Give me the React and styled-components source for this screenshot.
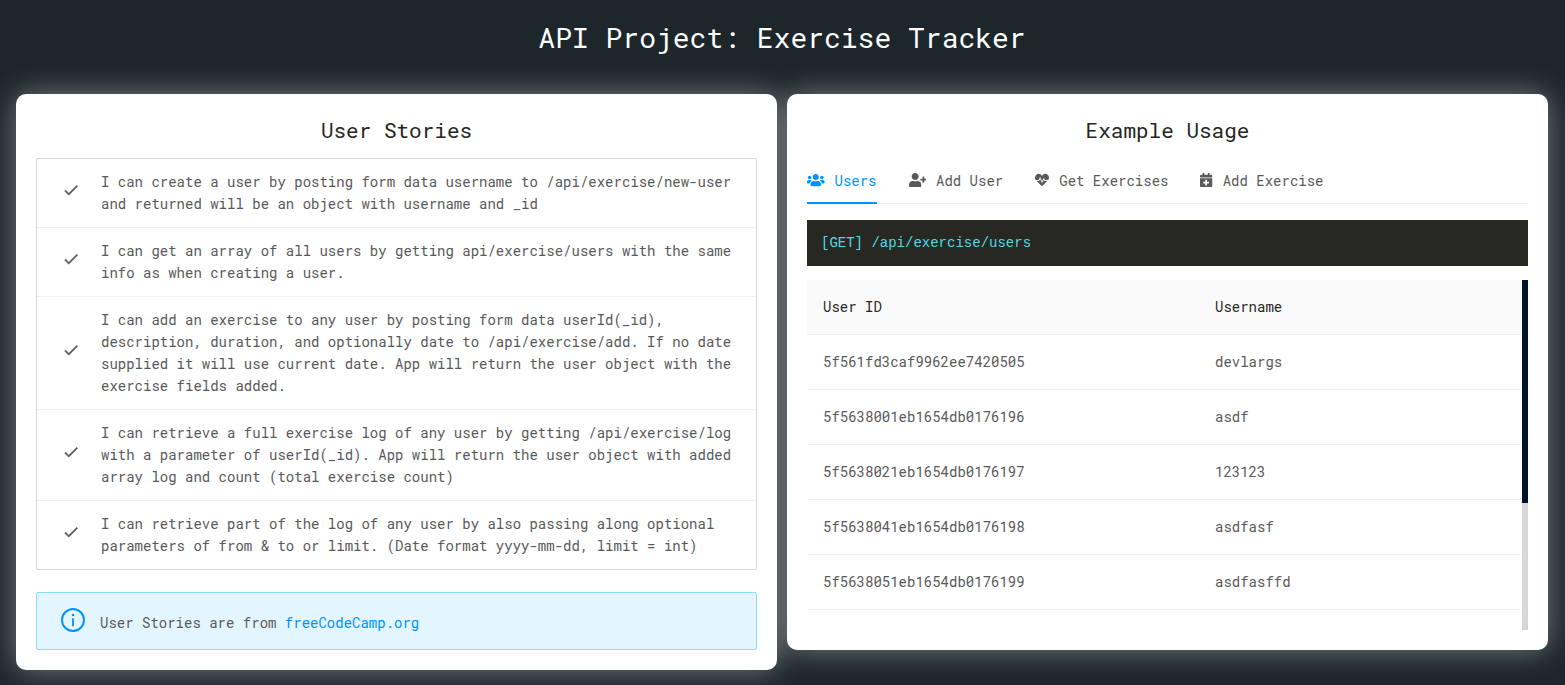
import React from "react";
import styled, { createGlobalStyle } from "styled-components";
import { FaUsers, FaUserPlus, FaHeartbeat, FaCalendarPlus } from "react-icons/fa";

const GlobalStyle = createGlobalStyle`
  *, *::before, *::after { box-sizing: border-box; }
  body {
    margin: 0;
    background: #1c262b;
    color: #595959;
    font: 14px/22px "Roboto Mono", "Liberation Mono", monospace;
    overflow: hidden;
  }
`;

const Page = styled.main`
  display: flex;
  flex-direction: column;
  height: 685px;
  padding: 0 17px 0 16px;
`;

const PageTitle = styled.h1`
  margin: 0;
  padding-top: 20px;
  height: 94px;
  font-size: 28px;
  line-height: 36px;
  font-weight: 400;
  text-align: center;
  color: #fff;
`;

const Columns = styled.div`
  display: grid;
  grid-template-columns: 1fr 1fr;
  gap: 10px;
  align-items: start;
`;

const Card = styled.section`
  padding: 20px;
  border-radius: 10px;
  background: #fff;
  box-shadow: 0 0 30px rgba(255, 255, 255, 0.4);
`;

const CardTitle = styled.h2`
  margin: 0;
  height: 44px;
  font-size: 21px;
  line-height: 32px;
  font-weight: 400;
  text-align: center;
  color: #262626;
`;

const StoryList = styled.ul`
  list-style: none;
  margin: 0;
  padding: 0;
  border: 1px solid #d9d9d9;
  border-radius: 2px;
`;

const Story = styled.li`
  display: flex;
  align-items: center;
  gap: 22px;
  padding: 12px 24px;
  & + & { border-top: 1px solid #f0f0f0; }
`;

const CheckIcon = styled.svg`
  flex: none;
  width: 18px;
  height: 18px;
  margin: -7px -0.7px 0 0.7px;
  fill: #595959;
  stroke: #595959;
  stroke-width: 0.5;
`;

const StoryText = styled.span`
  flex: 1;
`;

const Notice = styled.div`
  display: flex;
  align-items: center;
  gap: 15px;
  height: 58px;
  margin-top: 22px;
  padding: 0 24px;
  border: 1px solid #87dbff;
  border-radius: 2px;
  background: #e3f6ff;
`;

const InfoIcon = styled.svg`
  flex: none;
  width: 24px;
  height: 24px;
  margin-top: -2px;
`;

const NoticeText = styled.span`
  padding-top: 4px;
`;

const Link = styled.a`
  color: #0091ff;
  text-decoration: none;
`;

const Tabs = styled.nav`
  display: flex;
  gap: 32px;
  height: 46px;
  border-bottom: 1px solid #f0f0f0;
`;

const Tab = styled.div`
  display: flex;
  align-items: center;
  height: 46px;
  padding-top: 2px;
  color: ${(p) => (p.$active ? "#0091ff" : "#595959")};
  border-bottom: ${(p) => (p.$active ? "2px solid #0091ff" : "2px solid transparent")};
`;

const TabIcon = styled.span`
  display: flex;
  justify-content: center;
  width: ${(p) => p.$width}px;
  margin: -3px 10px 0 0;
  svg { flex: none; width: ${(p) => p.$width}px; height: 14px; }
`;

const Endpoint = styled.pre`
  margin: 16px 0 14px;
  padding: 13px 14px 12px;
  height: 46px;
  background: #272822;
  color: #4fd8e8;
  font: 14px/21px "Liberation Mono", monospace;
`;

const ScrollArea = styled.div`
  display: flex;
  gap: 1px;
  height: 350px;
`;

const Table = styled.div`
  flex: 1;
`;

const Row = styled.div`
  display: grid;
  grid-template-columns: 392px 1fr;
  height: 55px;
  line-height: 54px;
  border-bottom: 1px solid #f0f0f0;
  background: ${(p) => (p.$head ? "#fafafa" : "#fff")};
  color: ${(p) => (p.$head ? "#262626" : "#595959")};
`;

const Cell = styled.span`
  padding: 0 16px;
`;

const Track = styled.div`
  width: 6px;
  background: #dedede;
  box-shadow: inset 0 0 5px rgba(0, 0, 0, 0.1);
`;

const Thumb = styled.div`
  height: 223px;
  background: #001529;
`;

const stories = [
  "I can create a user by posting form data username to /api/exercise/new-user and returned will be an object with username and _id",
  "I can get an array of all users by getting api/exercise/users with the same info as when creating a user.",
  "I can add an exercise to any user by posting form data userId(_id), description, duration, and optionally date to /api/exercise/add. If no date supplied it will use current date. App will return the user object with the exercise fields added.",
  "I can retrieve a full exercise log of any user by getting /api/exercise/log with a parameter of userId(_id). App will return the user object with added array log and count (total exercise count)",
  "I can retrieve part of the log of any user by also passing along optional parameters of from & to or limit. (Date format yyyy-mm-dd, limit = int)",
];

const tabs = [
  { label: "Users", Icon: FaUsers, width: 17.5 },
  { label: "Add User", Icon: FaUserPlus, width: 17.5 },
  { label: "Get Exercises", Icon: FaHeartbeat, width: 14 },
  { label: "Add Exercise", Icon: FaCalendarPlus, width: 12.25 },
];

const users = [
  ["5f561fd3caf9962ee7420505", "devlargs"],
  ["5f5638001eb1654db0176196", "asdf"],
  ["5f5638021eb1654db0176197", "123123"],
  ["5f5638041eb1654db0176198", "asdfasf"],
  ["5f5638051eb1654db0176199", "asdfasffd"],
];

export default function App() {
  return (
    <>
      <GlobalStyle />
      <Page>
        <PageTitle>API Project: Exercise Tracker</PageTitle>
        <Columns>
          <Card>
            <CardTitle>User Stories</CardTitle>
            <StoryList>
              {stories.map((text) => (
                <Story key={text}>
                  <CheckIcon viewBox="0 0 24 24">
                    <path d="M9 16.17 4.83 12l-1.42 1.41L9 19 21 7l-1.41-1.41z" />
                  </CheckIcon>
                  <StoryText>{text}</StoryText>
                </Story>
              ))}
            </StoryList>
            <Notice>
              <InfoIcon viewBox="0 0 24 24">
                <circle cx="12" cy="12" r="11" fill="none" stroke="#0091ff" strokeWidth="1.9" />
                <circle cx="12" cy="7" r="1.25" fill="#0091ff" />
                <path d="M11.1 10.2h1.8v8h-1.8z" fill="#0091ff" />
              </InfoIcon>
              <NoticeText>
                User Stories are from <Link>freeCodeCamp.org</Link>
              </NoticeText>
            </Notice>
          </Card>
          <Card>
            <CardTitle>Example Usage</CardTitle>
            <Tabs>
              {tabs.map(({ label, Icon, width }, i) => (
                <Tab key={label} $active={i === 0}>
                  <TabIcon $width={width}>
                    <Icon />
                  </TabIcon>
                  {label}
                </Tab>
              ))}
            </Tabs>
            <Endpoint>[GET] /api/exercise/users</Endpoint>
            <ScrollArea>
              <Table>
                <Row $head>
                  <Cell>User ID</Cell>
                  <Cell>Username</Cell>
                </Row>
                {users.map(([id, name]) => (
                  <Row key={id}>
                    <Cell>{id}</Cell>
                    <Cell>{name}</Cell>
                  </Row>
                ))}
              </Table>
              <Track>
                <Thumb />
              </Track>
            </ScrollArea>
          </Card>
        </Columns>
      </Page>
    </>
  );
}
